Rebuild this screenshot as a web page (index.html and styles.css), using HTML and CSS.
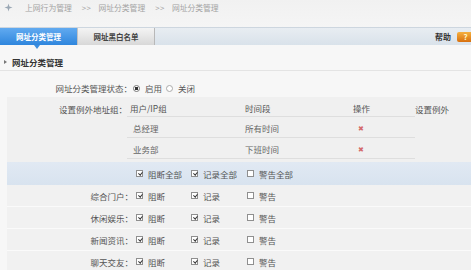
FILE: index.html
```html
<!DOCTYPE html>
<html lang="zh-CN">
<head>
    <meta charset="UTF-8">
    <title>网址分类管理</title>
    <link rel="stylesheet" href="styles.css">
</head>
<body>
    <div class="crumbs">
        <svg class="crumb-icon" viewBox="0 0 10 10"><path d="M5 0.5 L6 4 L9.5 5 L6 6 L5 9.5 L4 6 L0.5 5 L4 4 Z"/></svg>
        <span>上网行为管理</span><span class="sep">&gt;&gt;</span><span>网址分类管理</span><span class="sep">&gt;&gt;</span><span>网址分类管理</span>
    </div>

    <div class="tabbar">
        <div class="tabs">
            <a href="#" class="tab active">网址分类管理</a>
            <a href="#" class="tab">网址黑白名单</a>
        </div>
        <div class="help">帮助<span class="help-icon">?</span></div>
    </div>

    <div class="section-title">网址分类管理</div>

    <div class="status-row">
        <span class="label">网址分类管理状态：</span>
        <label class="opt"><input type="radio" name="state" checked>启用</label>
        <label class="opt"><input type="radio" name="state">关闭</label>
    </div>

    <div class="except-box">
        <div class="cell label">设置例外地址组：</div>
        <div class="cell head first">用户/IP组</div>
        <div class="cell head">时间段</div>
        <div class="cell head">操作</div>
        <div class="cell">设置例外</div>

        <div class="cell"></div>
        <div class="cell data first">总经理</div>
        <div class="cell data">所有时间</div>
        <div class="cell data del">✖</div>
        <div class="cell"></div>

        <div class="cell"></div>
        <div class="cell data first">业务部</div>
        <div class="cell data">下班时间</div>
        <div class="cell data del">✖</div>
        <div class="cell"></div>
    </div>

    <div class="cat-row bulk">
        <span class="label"></span>
        <label class="opt"><input type="checkbox" checked>阻断全部</label>
        <label class="opt"><input type="checkbox" checked>记录全部</label>
        <label class="opt"><input type="checkbox">警告全部</label>
    </div>

    <div class="cat-row">
        <span class="label">综合门户：</span>
        <label class="opt"><input type="checkbox" checked>阻断</label>
        <label class="opt"><input type="checkbox" checked>记录</label>
        <label class="opt"><input type="checkbox">警告</label>
    </div>
    <div class="cat-row">
        <span class="label">休闲娱乐：</span>
        <label class="opt"><input type="checkbox" checked>阻断</label>
        <label class="opt"><input type="checkbox" checked>记录</label>
        <label class="opt"><input type="checkbox">警告</label>
    </div>
    <div class="cat-row">
        <span class="label">新闻资讯：</span>
        <label class="opt"><input type="checkbox" checked>阻断</label>
        <label class="opt"><input type="checkbox" checked>记录</label>
        <label class="opt"><input type="checkbox">警告</label>
    </div>
    <div class="cat-row">
        <span class="label">聊天交友：</span>
        <label class="opt"><input type="checkbox" checked>阻断</label>
        <label class="opt"><input type="checkbox" checked>记录</label>
        <label class="opt"><input type="checkbox">警告</label>
    </div>
</body>
</html>
```

FILE: styles.css
```css
body, html {
    margin: 0;
    height: 100%;
    overflow: hidden;
    background-color: #f7f7f7;
    font-family: "Noto Sans CJK SC", "Noto Sans", sans-serif;
    font-size: 8.5px;
    color: #555;
}

/* breadcrumb */
.crumbs {
    height: 25px;
    padding: 2px 0 0 4px;
    display: flex;
    align-items: flex-start;
    line-height: 12px;
    font-size: 7.8px;
    color: #a3a3a3;
    background: linear-gradient(#f1f1f1, #f5f5f5);
}
.crumb-icon { width: 9px; height: 9px; fill: #9aa7b4; margin: 1px 12px 0 0; }
.crumbs .sep { margin: 0 7px 0 10px; letter-spacing: 0.5px; }

/* tabs */
.tabbar {
    height: 17px;
    border-top: 1px solid #cdd6df;
    background: linear-gradient(#e8edf2, #d9e2ea);
    display: flex;
    justify-content: space-between;
    align-items: stretch;
}
.tabs { display: flex; }
.tab {
    width: 78px;
    display: flex;
    justify-content: center;
    align-items: center;
    font-size: 7.5px;
    text-decoration: none;
    color: #444;
    font-weight: 700;
    background: linear-gradient(#f4f4f4, #d8d8d8);
    border-left: 1px solid #c2c2c2;
    border-right: 1px solid #b8b8b8;
    box-sizing: border-box;
}
.tab.active {
    position: relative;
    width: 77px;
    color: #fff;
    border: none;
    background: linear-gradient(#61aaf0, #2f86dd);
}
.tab.active::after {
    content: "";
    position: absolute;
    left: 34px;
    bottom: -4px;
    border-left: 3px solid transparent;
    border-right: 3px solid transparent;
    border-top: 4px solid #3b8ee0;
}
.help {
    display: flex;
    align-items: center;
    gap: 6px;
    font-size: 8px;
    font-weight: 700;
    color: #333;
    margin-right: -3px;
}
.help-icon {
    width: 17px;
    height: 10px;
    border-radius: 2px;
    background: linear-gradient(#f5b040, #d8700e);
    color: #fff6c8;
    font-size: 8px;
    font-weight: 700;
    line-height: 10px;
    text-align: center;
}

/* section */
.section-title {
    margin-top: 9px;
    height: 16px;
    line-height: 16px;
    padding-left: 12px;
    position: relative;
    font-weight: 700;
    color: #333;
    border-bottom: 1px solid #e4e4e4;
}
.section-title::before {
    content: "";
    position: absolute;
    left: 4px;
    top: 6px;
    border-top: 2px solid transparent;
    border-bottom: 2px solid transparent;
    border-left: 3px solid #777;
}

.status-row {
    height: 12px;
    line-height: 12px;
    padding: 11px 0 3px 0;
    display: flex;
    align-items: center;
}
.status-row .label {
    width: 133px;
    text-align: right;
    padding-right: 1px;
    box-sizing: border-box;
}
.status-row .opt { margin-right: 4px; }

.opt {
    display: flex;
    align-items: center;
    white-space: nowrap;
}

input[type=radio], input[type=checkbox] {
    appearance: none;
    -webkit-appearance: none;
    margin: 0 3px 0 0;
    width: 7px;
    height: 7px;
    border: 1px solid #8f8f8f;
    background: #fff;
    box-sizing: border-box;
    position: relative;
}
input[type=radio] { border-radius: 50%; border-color: #aaa; margin-right: 5px; }
input[type=radio]:checked { background: radial-gradient(circle, #333 0 1.6px, #fff 2px); border-color: #777; }
input[type=checkbox] { margin-right: 5px; }
input[type=checkbox]:checked::after {
    content: "";
    position: absolute;
    left: 1.5px;
    top: 0;
    width: 1.5px;
    height: 3px;
    border-right: 1px solid #333;
    border-bottom: 1px solid #333;
    transform: rotate(40deg);
}

/* exception groups */
.except-box {
    margin-left: 7px;
    padding: 3px 0;
    background-color: #f0f0f0;
    display: grid;
    grid-template-columns: 120px 118px 108px 62px 1fr;
    grid-template-rows: 17px 21px 21px;
}
.except-box .cell {
    display: flex;
    align-items: center;
    box-sizing: border-box;
}
.except-box .label { justify-content: flex-end; }
.except-box .head, .except-box .data { border-bottom: 1px solid #dedede; }
.except-box .head.first { padding-left: 3px; }
.except-box .data { padding-top: 1px; color: #666; }
.except-box .data.first { padding-left: 6px; }
.except-box .del { padding-left: 5px; color: #d46a6a; font-size: 7px; }

/* categories */
.cat-row {
    margin-left: 7px;
    height: 22px;
    display: grid;
    grid-template-columns: 127px 55px 56px 1fr;
    align-items: center;
    background-color: #f1f1f1;
    border-bottom: 1px solid #fafafa;
    box-sizing: border-box;
}
.cat-row .label { text-align: right; padding-right: 1px; }
.cat-row .opt { padding-left: 2px; }
.cat-row.bulk {
    height: 23px;
    background: linear-gradient(#e1e9f3, #d8e3ef);
    border-bottom: none;
}
```
